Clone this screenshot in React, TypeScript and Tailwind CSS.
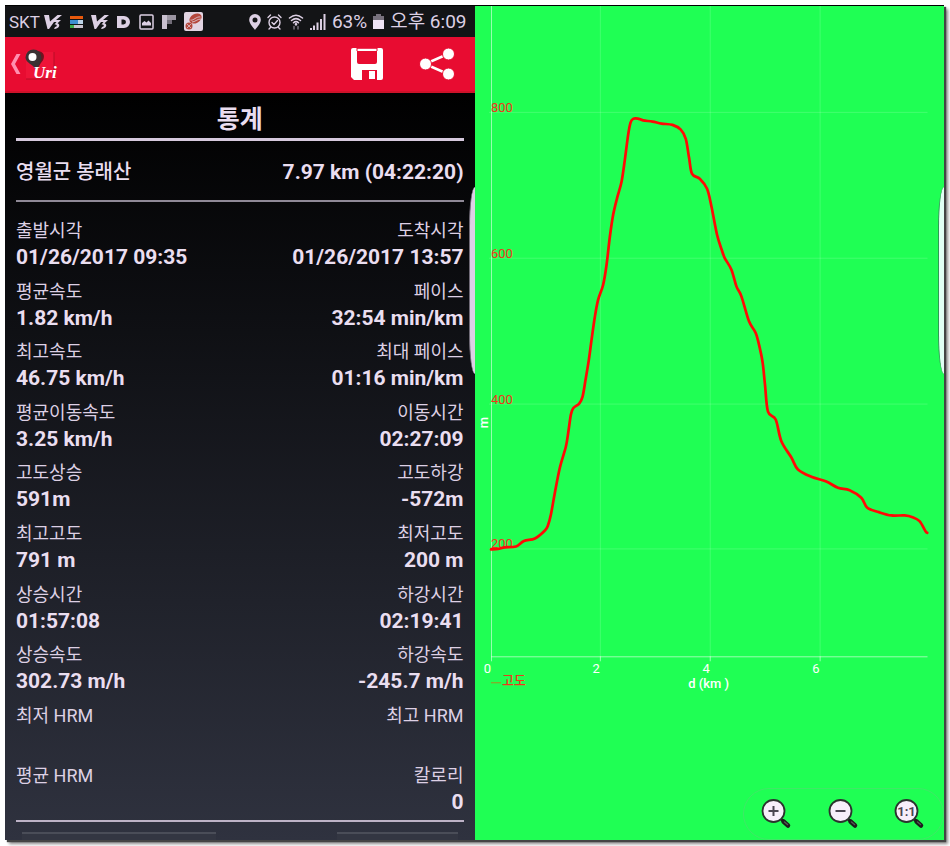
/**
 * Track statistics screen: phone status bar, red action bar and the list of
 * stats on the left, elevation profile over distance on the right.
 */
import type { ReactNode } from "react";

type Cell = { label: string; value: string };

const STATS: Array<[Cell, Cell]> = [
  [
    { label: "출발시각", value: "01/26/2017 09:35" },
    { label: "도착시각", value: "01/26/2017 13:57" },
  ],
  [
    { label: "평균속도", value: "1.82 km/h" },
    { label: "페이스", value: "32:54 min/km" },
  ],
  [
    { label: "최고속도", value: "46.75 km/h" },
    { label: "최대 페이스", value: "01:16 min/km" },
  ],
  [
    { label: "평균이동속도", value: "3.25 km/h" },
    { label: "이동시간", value: "02:27:09" },
  ],
  [
    { label: "고도상승", value: "591m" },
    { label: "고도하강", value: "-572m" },
  ],
  [
    { label: "최고고도", value: "791 m" },
    { label: "최저고도", value: "200 m" },
  ],
  [
    { label: "상승시간", value: "01:57:08" },
    { label: "하강시간", value: "02:19:41" },
  ],
  [
    { label: "상승속도", value: "302.73 m/h" },
    { label: "하강속도", value: "-245.7 m/h" },
  ],
  [
    { label: "최저 HRM", value: "" },
    { label: "최고 HRM", value: "" },
  ],
  [
    { label: "평균 HRM", value: "" },
    { label: "칼로리", value: "0" },
  ],
];

// Elevation profile in chart units (470 x 700).
const PROFILE: Array<[number, number]> = [
  [16, 545], [23, 544.5], [30, 543], [41, 542], [49, 536.5], [60, 534], [70, 526],
  [73, 521], [76, 510], [80, 488], [85, 463], [91, 442], [93.5, 427], [96, 410],
  [98.3, 403.7], [104.3, 399], [107.7, 392], [110.7, 375], [114, 355], [116.7, 335],
  [120, 312], [123.3, 295], [128.3, 280], [131.7, 260], [135, 232], [138.3, 210],
  [142.3, 193], [146.7, 177], [150, 155], [153.3, 130], [155.7, 117.7], [158.3, 114],
  [163, 113.7], [168.3, 115.5], [177.7, 116.7], [186.7, 118.7], [197.7, 120],
  [206, 124.7], [211, 134], [214.3, 153], [217.3, 169], [225, 174], [232.3, 184],
  [236.7, 201.7], [242.3, 230], [247.3, 246], [250, 253.3], [256.7, 265],
  [261.7, 281.7], [266.7, 291.7], [274.3, 316.7], [281, 328.3], [285, 343],
  [288, 358.3], [290.3, 380], [293.3, 407], [301, 415], [306.7, 436.7], [316.7, 453],
  [323.3, 465], [336.7, 472.3], [351.7, 477], [363.3, 483.3], [375, 485.7],
  [386.7, 493.3], [392.7, 503.3], [404.3, 507.7], [416.7, 511], [430, 511],
  [438, 512.7], [445, 516.7], [451, 526.7], [452.7, 528.3],
];

const Y_TICKS = [
  { label: "800", y: 107 },
  { label: "600", y: 253 },
  { label: "400", y: 399 },
  { label: "200", y: 544 },
];

const X_TICKS = [
  { label: "0", x: 16 },
  { label: "2", x: 125 },
  { label: "4", x: 235 },
  { label: "6", x: 345 },
];

function smoothPath(pts: Array<[number, number]>): string {
  let d = `M${pts[0][0]} ${pts[0][1]}`;
  for (let i = 0; i < pts.length - 1; i++) {
    const p0 = pts[Math.max(i - 1, 0)];
    const p1 = pts[i];
    const p2 = pts[i + 1];
    const p3 = pts[Math.min(i + 2, pts.length - 1)];
    d += ` C${p1[0] + (p2[0] - p0[0]) / 6} ${p1[1] + (p2[1] - p0[1]) / 6}`;
    d += ` ${p2[0] - (p3[0] - p1[0]) / 6} ${p2[1] - (p3[1] - p1[1]) / 6} ${p2[0]} ${p2[1]}`;
  }
  return d;
}

function V3Icon() {
  return (
    <svg viewBox="0 0 18 16" className="h-4 w-[18px]" fill="currentColor">
      <path d="M0 1h5l1 6.5L13.5 1H18l-6 5h5l-3.500 3.200c3 .8 2.500 5.300-3.500 5.800l1-2c2.500-.5 2.500-2.500-.5-2.500l2-2.500h-2.500L5 15H3.500z" />
    </svg>
  );
}

function StatusBar() {
  return (
    <div className="flex h-8 items-center justify-between border-t border-black bg-[#131416] pr-2 pl-1 text-[#ddd0e4]">
      <div className="flex items-center gap-2">
        <div className="flex items-center gap-1">
          <span className="text-[17px] leading-5">SKT</span>
          <V3Icon />
        </div>
        <svg viewBox="0 0 13 12" className="h-3 w-[13px]">
          <path d="M0 0h13v3H0z" fill="#e8590c" />
          <path d="M0 4h13v4H0z" fill="#bcd3e8" />
          <path d="M0 4h8v4H0z" fill="#3d8fd1" />
          <path d="M0 9h13v3H0z" fill="#c9c3cf" />
          <path d="M0 9h4v3H0z" fill="#3fae49" />
        </svg>
        <V3Icon />
        <svg viewBox="0 0 14 14" className="h-3.5 w-3.5">
          <path
            d="M0 1h7a6 6 0 0 1 0 12H0zM4.500 4.500v5h2a2.500 2.500 0 0 0 0-5z"
            fill="currentColor"
            fillRule="evenodd"
          />
        </svg>
        <svg viewBox="0 0 15 16" className="h-4 w-[15px]">
          <rect x="1" y="1" width="13" height="14" rx="1" fill="none" stroke="currentColor" strokeWidth="1.5" />
          <path d="M3 11.500V9l2.500-2 2 1.500 2-2L12 9v2.500z" fill="currentColor" />
        </svg>
        <svg viewBox="0 0 14 14" className="h-3.5 w-3.5">
          <path d="M0 0h5v14H0z" fill="#c9c0cf" />
          <path d="M5 0h9v5H5z" fill="#9b95a1" />
          <path d="M5 5h5v4H5z" fill="#726d78" />
        </svg>
        <svg viewBox="0 0 19 19" className="h-[19px] w-[19px]">
          <rect width="19" height="19" rx="2" fill="#e2d4e2" />
          <ellipse cx="11.5" cy="6.5" rx="6.5" ry="4.5" transform="rotate(-30 11.5 6.5)" fill="#b5473c" />
          <path d="M6.500 8c3 1 6-4 10-3M8 10c3 0 5-3 9-3" fill="none" stroke="#e2d4e2" strokeWidth=".8" />
          <circle cx="5" cy="14" r="3.5" fill="#b5473c" />
          <path d="M3 12l4 4M7 12l-4 4" stroke="#e2d4e2" strokeWidth=".7" />
        </svg>
      </div>

      <div className="flex items-center gap-1.5">
        <svg viewBox="0 0 12 16" className="h-4 w-3">
          <path
            d="M6 0a5.800 5.800 0 0 0-5.800 6C.2 9.500 4 13 6 16c2-3 5.800-6.500 5.800-10A5.800 5.800 0 0 0 6 0zm0 3.500a2.500 2.500 0 1 1 0 5 2.500 2.500 0 0 1 0-5z"
            fill="currentColor"
            fillRule="evenodd"
          />
        </svg>
        <svg
          viewBox="0 0 15 16"
          className="h-4 w-[15px]"
          fill="none"
          stroke="currentColor"
          strokeWidth="1.4"
          strokeLinecap="round"
        >
          <circle cx="7.5" cy="8.5" r="5.5" />
          <path d="M1 3.500L3.500 1M14 3.500L11.500 1M3.500 13.500L2 15M11.500 13.500L13 15M5 8.500l2 2 3.500-4" />
        </svg>
        <svg
          viewBox="0 0 16 16"
          className="h-4 w-4"
          fill="none"
          stroke="currentColor"
          strokeWidth="1.5"
          strokeLinecap="round"
        >
          <path d="M1.500 4c4-3.500 9-3.500 13 0M3.500 6.500c3-2.500 6-2.500 9 0M5.500 8.800c1.500-1.400 3.500-1.400 5 0" />
          <circle cx="8" cy="10.3" r=".6" fill="currentColor" />
          <path d="M6 15v-2.500M10 12.500V15" stroke="#77717d" />
        </svg>
        <svg viewBox="0 0 16 16" className="h-4 w-4" fill="currentColor">
          <path d="M0 14h2v2H0zM3 11.500h2V16H3zM6.500 8.500h2V16h-2zM10 5h2v11h-2zM13.500 0h2v16h-2z" />
        </svg>
        <span className="text-[19px] leading-6">63%</span>
        <svg viewBox="0 0 11 15" className="h-[15px] w-[11px]">
          <path d="M3 0h5v2h3v5H0V2h3z" fill="#77717d" />
          <path d="M0 6h11v9H0z" fill="#eee3f4" />
        </svg>
        <span className="text-[19px] leading-6">오후 6:09</span>
      </div>
    </div>
  );
}

function ActionBar() {
  return (
    <header className="flex h-14 items-center justify-between border-b-2 border-[#cd1229] bg-[#e80c31] pr-5 pl-1.5">
      <button type="button" aria-label="뒤로" className="flex items-center">
        <svg viewBox="0 0 10 20" className="h-5 w-2.5">
          <path d="M9.500 0h-4L0 10l5.500 10h4L4 10z" fill="#ff8fb0" />
        </svg>
        <svg viewBox="0 0 34 34" className="ml-1 h-[34px] w-[34px]">
          <path d="M1 5h28v27H1z" fill="#ee1438" />
          <path d="M1 32h28V5" fill="none" stroke="#b80d27" />
          <path d="M12 4c6 0 8 4 6.500 8-1 3-3.500 4-5 9z" fill="#6e1420" />
          <path d="M8.500 2.500A8 8 0 0 0 .5 10.500c0 5.500 7.500 6.500 12 13.500.5-6 4-9 4-13.500a8 8 0 0 0-8-8z" fill="#3b3233" />
          <circle cx="7.500" cy="10" r="4" fill="#fff" />
          <text
            x="8"
            y="31"
            fontSize="17"
            fontStyle="italic"
            fontWeight="700"
            fill="#fff"
            fontFamily="'Liberation Serif', serif"
          >
            Uri
          </text>
        </svg>
      </button>
      <div className="flex items-center gap-9">
        <button type="button" aria-label="저장">
          <svg viewBox="0 0 32 32" className="h-8 w-8">
            <path
              d="M2 0h28a2 2 0 0 1 2 2v28a2 2 0 0 1-2 2H3l-3-3V2a2 2 0 0 1 2-2zM6 3v11a2 2 0 0 0 2 2h16a2 2 0 0 0 2-2V3zM11 22v10h15V22z"
              fill="#fff"
              fillRule="evenodd"
            />
            <path d="M18 23h6v8h-6z" fill="#fff" />
            <path d="M6 0v3M26 0v3M6 .3h20" stroke="#e80c31" />
          </svg>
        </button>
        <button type="button" aria-label="공유">
          <svg viewBox="0 0 36 32" className="h-8 w-9">
            <path d="M29 6L6 16l23 10" fill="none" stroke="#fff" strokeWidth="2.5" />
            <g fill="#fff" stroke="#e80c31">
              <circle cx="6.5" cy="16" r="6" />
              <circle cx="29.5" cy="6" r="6" />
              <circle cx="29.5" cy="26" r="6" />
            </g>
          </svg>
        </button>
      </div>
    </header>
  );
}

function StatCell({ label, value }: Cell) {
  return (
    <div className="pt-[3px] last:text-right">
      <dt className="text-[18px] leading-[27px] text-[#ddd0e4]">{label}</dt>
      <dd className="h-[27px] text-[21px] leading-[27px] font-bold">{value}</dd>
    </div>
  );
}

function StatsPanel() {
  return (
    <section className="relative flex flex-col bg-black">
      <StatusBar />
      <ActionBar />
      <div className="flex flex-1 flex-col bg-linear-to-b/srgb from-black to-[#2f323f] px-[11px] text-[#eadef0]">
        <h1 className="flex h-12 items-center justify-center border-b-[3px] border-[#d6c9dd] pt-2 text-[25px] leading-8 font-bold">
          통계
        </h1>
        <div className="flex h-[61px] items-center justify-between border-b-2 border-[#8f8996] pt-0.5 text-[20px] leading-7">
          <h2 className="font-medium">영월군 봉래산</h2>
          <span className="text-[21px] font-bold">7.97 km (04:22:20)</span>
        </div>
        <dl className="mt-3 grid flex-1 auto-rows-fr border-b-2 border-[#bdb2c6]">
          {STATS.map(([left, right]) => (
            <div key={left.label} className="flex justify-between">
              <StatCell {...left} />
              <StatCell {...right} />
            </div>
          ))}
        </dl>
        {/* Tops of the next row of fields, below the fold */}
        <div className="mt-2.5 flex h-2 justify-between px-1.5">
          <div className="w-[194px] border-t-2 border-[#4a4d58] bg-[#333642]" />
          <div className="w-[121px] border-t-2 border-[#4a4d58] bg-[#333642]" />
        </div>
      </div>
      {/* Edge panel handle */}
      <div className="absolute top-[182px] right-0 h-[187px] w-1.5 border-l border-[#6f6a76] bg-[#dcd0e4] [border-radius:6px_0_0_6px/40px_0_0_40px]" />
    </section>
  );
}

function ElevationChart() {
  return (
    <svg
      viewBox="0 1 470 699"
      className="w-full"
      role="img"
      aria-label="고도"
      fontFamily="Roboto, 'Noto Sans CJK KR', sans-serif"
      fontSize="13"
    >
      <g stroke="#fff" strokeOpacity=".16">
        {Y_TICKS.map((t) => (
          <path key={t.label} d={`M14 ${t.y + 0.5}H453`} />
        ))}
        {X_TICKS.slice(1).map((t) => (
          <path key={t.label} d={`M${t.x + 0.5} 1V652`} />
        ))}
      </g>
      <g stroke="#fff" strokeOpacity=".55">
        <path d="M16 652.500H453M16.500 1V657" />
        {X_TICKS.slice(1).map((t) => (
          <path key={t.label} d={`M${t.x + 0.5} 652V657`} />
        ))}
      </g>

      <g fill="#f0371c">
        {Y_TICKS.map((t) => (
          <text key={t.label} x="16" y={t.y}>
            {t.label}
          </text>
        ))}
      </g>
      <g fill="#fff" textAnchor="end">
        {X_TICKS.map((t) => (
          <text key={t.label} x={t.x} y="669">
            {t.label}
          </text>
        ))}
      </g>
      <text x="234" y="684" fill="#fff" fontWeight="500" textAnchor="middle">
        d (km )
      </text>
      <text transform="translate(13 418) rotate(-90)" fill="#fff" fontWeight="500" textAnchor="middle">
        m
      </text>
      <path d="M16 678.500H26" stroke="#a8901f" />
      <text x="27" y="681" fill="#f0371c" fontWeight="500">
        고도
      </text>

      <path
        d={smoothPath(PROFILE)}
        fill="none"
        stroke="#ff0a05"
        strokeWidth="2.7"
        strokeLinecap="round"
        strokeLinejoin="round"
      />
    </svg>
  );
}

function ZoomButton({ label, children }: { label: string; children: ReactNode }) {
  return (
    <button type="button" aria-label={label}>
      <svg viewBox="0 0 31 31" className="h-[31px] w-[31px]">
        <path d="M20 20l3 3" stroke="#222" strokeWidth="2.5" />
        <path d="M22.500 22.500l4.500 4" stroke="#1c1c1c" strokeWidth="4.5" strokeLinecap="round" />
        <path d="M23.500 23l3 2.500" stroke="#555" strokeWidth="1.5" strokeLinecap="round" />
        <circle cx="12.5" cy="12" r="11" fill="#f7effb" stroke="#2b332e" strokeWidth="1.8" />
        {children}
      </svg>
    </button>
  );
}

function ChartPanel() {
  return (
    <section className="relative flex flex-col justify-between border-t border-black bg-[#1fff54]">
      <ElevationChart />
      <div className="ml-auto flex h-[52px] w-[201px] items-center justify-between rounded-[26px] border border-[#3fe867] pr-[18px] pl-[17px]">
        <ZoomButton label="확대">
          <path d="M7.500 12h10M12.500 7v10" stroke="#4b4652" strokeWidth="2" />
        </ZoomButton>
        <ZoomButton label="축소">
          <path d="M7.500 12h10" stroke="#4b4652" strokeWidth="2" />
        </ZoomButton>
        <ZoomButton label="원래 크기">
          <text
            x="12.5"
            y="17"
            fontSize="13"
            fontWeight="700"
            textAnchor="middle"
            fill="#4b4652"
            fontFamily="Roboto, sans-serif"
          >
            1:1
          </text>
        </ZoomButton>
      </div>
      {/* Edge panel handle */}
      <div className="absolute top-[181px] right-0 h-[187px] w-1.5 border-l border-[#2f9a52] bg-[#e0fff4] [border-radius:6px_0_0_6px/40px_0_0_40px]" />
    </section>
  );
}

export default function App() {
  return (
    <div className="flex min-h-screen bg-white pt-[5px] pr-1.5 pb-1.5 pl-[5px] font-['Roboto','Noto_Sans_CJK_KR',sans-serif]">
      <main className="grid flex-1 grid-cols-2 shadow-[2px_2px_1px_#444,4px_4px_3px_#888]">
        <StatsPanel />
        <ChartPanel />
      </main>
    </div>
  );
}
